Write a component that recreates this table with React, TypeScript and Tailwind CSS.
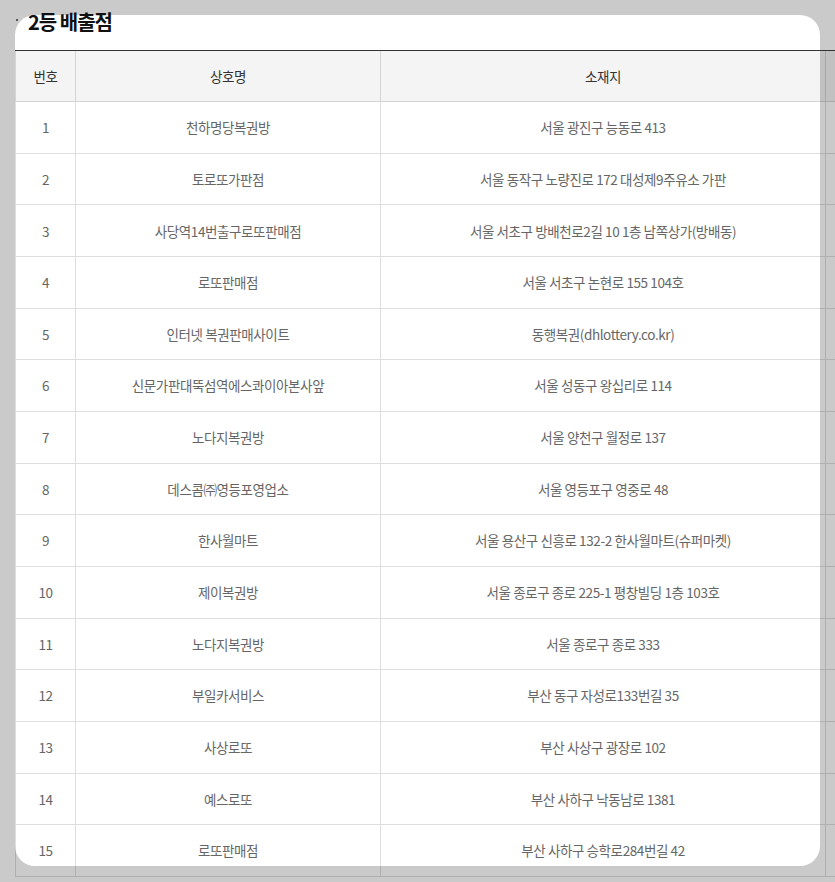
import React from "react";

const rows: [string, string][] = [
  ["천하명당복권방", "서울 광진구 능동로 413"],
  ["토로또가판점", "서울 동작구 노량진로 172 대성제9주유소 가판"],
  ["사당역14번출구로또판매점", "서울 서초구 방배천로2길 10 1층 남쪽상가(방배동)"],
  ["로또판매점", "서울 서초구 논현로 155 104호"],
  ["인터넷 복권판매사이트", "동행복권(dhlottery.co.kr)"],
  ["신문가판대뚝섬역에스콰이아본사앞", "서울 성동구 왕십리로 114"],
  ["노다지복권방", "서울 양천구 월정로 137"],
  ["데스콤㈜영등포영업소", "서울 영등포구 영중로 48"],
  ["한사월마트", "서울 용산구 신흥로 132-2 한사월마트(슈퍼마켓)"],
  ["제이복권방", "서울 종로구 종로 225-1 평창빌딩 1층 103호"],
  ["노다지복권방", "서울 종로구 종로 333"],
  ["부일카서비스", "부산 동구 자성로133번길 35"],
  ["사상로또", "부산 사상구 광장로 102"],
  ["예스로또", "부산 사하구 낙동남로 1381"],
  ["로또판매점", "부산 사하구 승학로284번길 42"],
];

export default function App() {
  return (
    <div
      className="w-[835px] h-[882px] overflow-hidden bg-[#cacaca] pl-[15px] pt-[15px]"
      style={{ fontFamily: '"Noto Sans CJK KR", "Noto Sans", sans-serif' }}
    >
      <div className="flow-root w-[805px] h-[851px] bg-white rounded-[20px]">
        <div className="flex -mt-[5px] h-[24px] mb-[16px]">
          <div className="w-[2px] h-[2px] bg-[#555] ml-[1px] mr-[10px] mt-[9px]" />
          <h2 className="text-[20px] leading-[24px] font-bold text-[#111] tracking-[-1px]">
            2등 배출점
          </h2>
        </div>
        <div className="w-[1000px] border-t border-[#333] text-[13.5px] tracking-[-0.4px]">
          <div className="flex h-[51px] bg-[rgba(0,0,0,0.045)] border-b border-l border-[rgba(0,0,0,0.13)] text-[#333]">
            <div className="w-[60px] border-r border-[rgba(0,0,0,0.13)] flex items-center justify-center">번호</div>
            <div className="w-[305px] border-r border-[rgba(0,0,0,0.13)] flex items-center justify-center">상호명</div>
            <div className="w-[445px] border-r border-[rgba(0,0,0,0.13)] flex items-center justify-center">소재지</div>
            <div className="flex-1" />
          </div>
          {rows.map(([name, addr], i) => (
            <div
              key={i}
              className="flex h-[51.67px] border-b border-l border-[rgba(0,0,0,0.13)] text-[#666]"
            >
              <div className="w-[60px] border-r border-[rgba(0,0,0,0.13)] flex items-center justify-center">{i + 1}</div>
              <div className="w-[305px] border-r border-[rgba(0,0,0,0.13)] flex items-center justify-center">{name}</div>
              <div className="w-[445px] border-r border-[rgba(0,0,0,0.13)] flex items-center justify-center">{addr}</div>
              <div className="flex-1" />
            </div>
          ))}
        </div>
      </div>
    </div>
  );
}
